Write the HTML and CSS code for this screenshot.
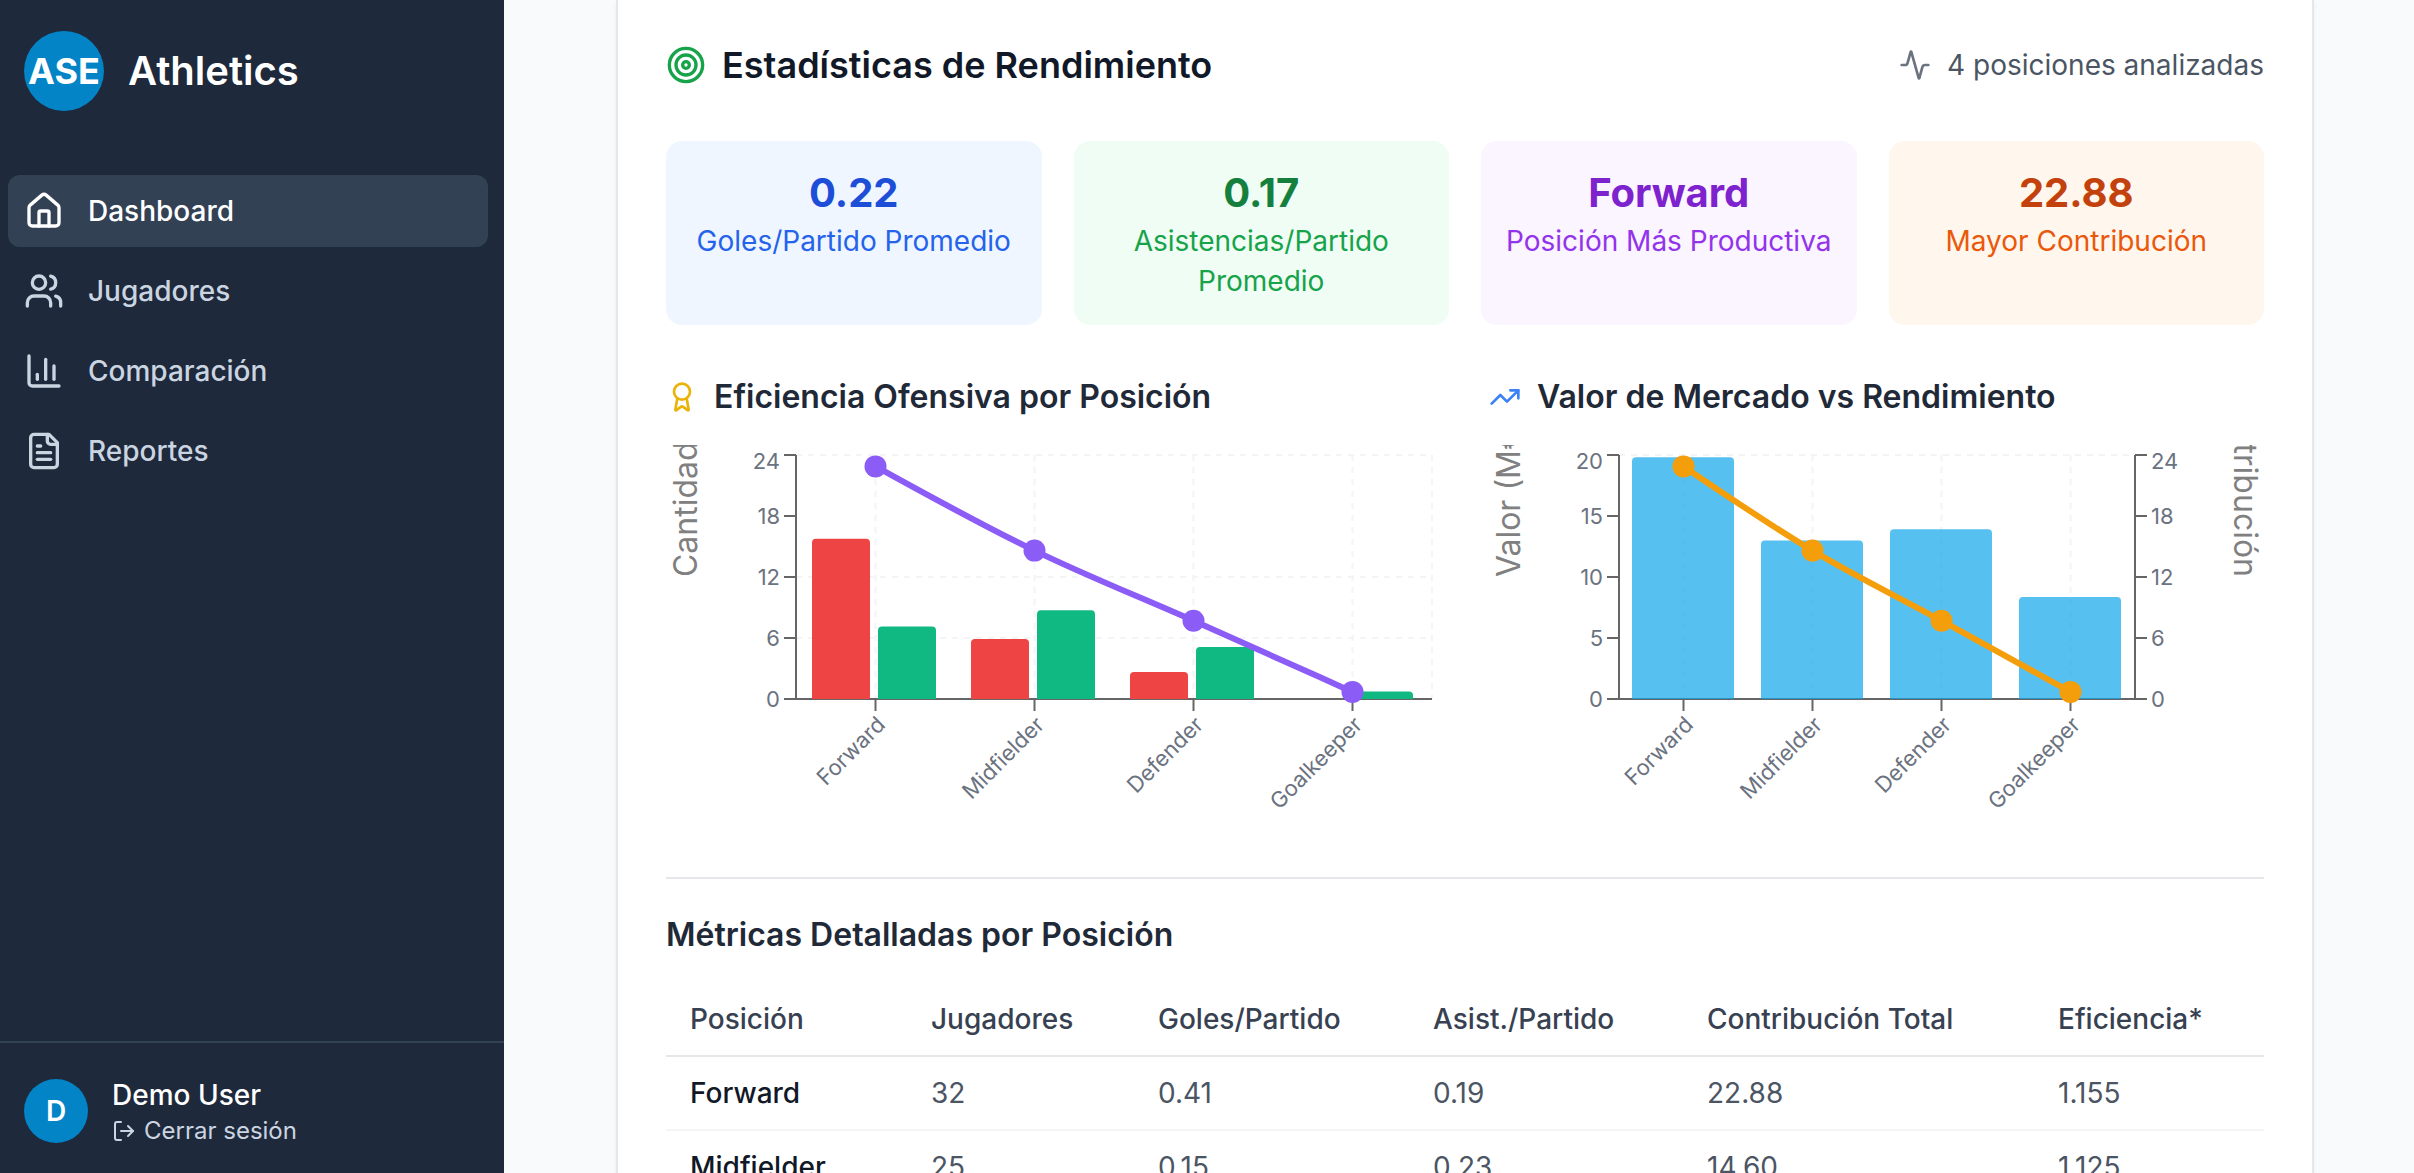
FILE: index.html
```html
<!DOCTYPE html>
<html lang="es">
<head>
<meta charset="utf-8">
<title>Athletics</title>
<link rel="stylesheet" href="styles.css">
</head>
<body>
<div class="app">
  <aside class="sidebar">
    <div class="brand">
      <span class="brand-logo">ASE</span>
      <span class="brand-name">Athletics</span>
    </div>
    <nav class="nav">
      <a class="nav-item active">
        <svg class="icon icon-lg" viewBox="0 0 24 24"><path d="M15 21v-8a1 1 0 0 0-1-1h-4a1 1 0 0 0-1 1v8"/><path d="M3 10a2 2 0 0 1 .709-1.528l7-5.999a2 2 0 0 1 2.582 0l7 5.999A2 2 0 0 1 21 10v9a2 2 0 0 1-2 2H5a2 2 0 0 1-2-2z"/></svg>
        Dashboard
      </a>
      <a class="nav-item">
        <svg class="icon icon-lg" viewBox="0 0 24 24"><path d="M16 21v-2a4 4 0 0 0-4-4H6a4 4 0 0 0-4 4v2"/><circle cx="9" cy="7" r="4"/><path d="M22 21v-2a4 4 0 0 0-3-3.87"/><path d="M16 3.13a4 4 0 0 1 0 7.75"/></svg>
        Jugadores
      </a>
      <a class="nav-item">
        <svg class="icon icon-lg" viewBox="0 0 24 24"><path d="M3 3v16a2 2 0 0 0 2 2h16"/><path d="M18 17V9"/><path d="M13 17V5"/><path d="M8 17v-3"/></svg>
        Comparación
      </a>
      <a class="nav-item">
        <svg class="icon icon-lg" viewBox="0 0 24 24"><path d="M15 2H6a2 2 0 0 0-2 2v16a2 2 0 0 0 2 2h12a2 2 0 0 0 2-2V7Z"/><path d="M14 2v4a2 2 0 0 0 2 2h4"/><path d="M10 9H8"/><path d="M16 13H8"/><path d="M16 17H8"/></svg>
        Reportes
      </a>
    </nav>
    <div class="account">
      <span class="avatar">D</span>
      <div class="account-text">
        <div class="account-name">Demo User</div>
        <a class="logout">
          <svg class="icon icon-sm" viewBox="0 0 24 24"><path d="M9 21H5a2 2 0 0 1-2-2V5a2 2 0 0 1 2-2h4"/><path d="m16 17 5-5-5-5"/><path d="M21 12H9"/></svg>
          Cerrar sesión
        </a>
      </div>
    </div>
  </aside>

  <main class="main">
    <section class="card">
      <header class="card-header">
        <h2 class="card-title">
          <svg class="icon icon-lg green" viewBox="0 0 24 24"><circle cx="12" cy="12" r="10"/><circle cx="12" cy="12" r="6"/><circle cx="12" cy="12" r="2"/></svg>
          Estadísticas de Rendimiento
        </h2>
        <div class="card-note">
          <svg class="icon icon-md gray" viewBox="0 0 24 24"><path d="M22 12h-2.480a2 2 0 0 0-1.930 1.460l-2.350 8.360a.25.25 0 0 1-.48 0L9.240 2.180a.25.25 0 0 0-.48 0l-2.350 8.360A2 2 0 0 1 4.490 12H2"/></svg>
          4 posiciones analizadas
        </div>
      </header>

      <div class="stats">
        <div class="stat blue"><div class="stat-value">0.22</div><div class="stat-label">Goles/Partido Promedio</div></div>
        <div class="stat emerald"><div class="stat-value">0.17</div><div class="stat-label">Asistencias/Partido Promedio</div></div>
        <div class="stat purple"><div class="stat-value">Forward</div><div class="stat-label">Posición Más Productiva</div></div>
        <div class="stat orange"><div class="stat-value">22.88</div><div class="stat-label">Mayor Contribución</div></div>
      </div>

      <div class="charts">
        <div class="chart">
          <h3 class="section-title">
            <svg class="icon icon-md yellow" viewBox="0 0 24 24"><path d="m15.477 12.890 1.515 8.526a.5.5 0 0 1-.81.470l-3.580-2.687a1 1 0 0 0-1.197 0l-3.586 2.686a.5.5 0 0 1-.81-.469l1.514-8.526"/><circle cx="12" cy="8" r="6"/></svg>
            Eficiencia Ofensiva por Posición
          </h3>
          <svg class="plot" width="776" height="384" viewBox="0 0 776 384">
            <g class="grid">
              <path d="M130 193H766M130 132H766M130 10H766"/>
              <path d="M209.500 10V254M368.500 10V254M527.500 10V254M686.500 10V254M766 10V254"/>
            </g>
            <g class="axis">
              <path d="M130 254H766M209.500 254v12M368.500 254v12M527.500 254v12M686.500 254v12"/>
              <path d="M130 10V254M118 254h12M118 193h12M118 132h12M118 71h12M118 10h12"/>
            </g>
            <g class="tick-y end">
              <text x="114" y="261.800">0</text><text x="114" y="200.800">6</text><text x="114" y="139.800">12</text><text x="114" y="78.800">18</text><text x="114" y="23.800">24</text>
            </g>
            <g class="tick-x">
              <text transform="translate(209.500 270) rotate(-45)" dy=".71em">Forward</text>
              <text transform="translate(368.500 270) rotate(-45)" dy=".71em">Midfielder</text>
              <text transform="translate(527.500 270) rotate(-45)" dy=".71em">Defender</text>
              <text transform="translate(686.500 270) rotate(-45)" dy=".71em">Goalkeeper</text>
            </g>
            <text class="axis-label" transform="translate(20 132) rotate(-90)" dy=".355em">Cantidad</text>
            <g class="bar-red">
              <path d="M146 254V97.700a4 4 0 0 1 4-4h50a4 4 0 0 1 4 4V254z"/>
              <path d="M305 254V198a4 4 0 0 1 4-4h50a4 4 0 0 1 4 4V254z"/>
              <path d="M464 254V231a4 4 0 0 1 4-4h50a4 4 0 0 1 4 4V254z"/>
            </g>
            <g class="bar-green">
              <path d="M212 254V185.400a4 4 0 0 1 4-4h50a4 4 0 0 1 4 4V254z"/>
              <path d="M371 254V169.300a4 4 0 0 1 4-4h50a4 4 0 0 1 4 4V254z"/>
              <path d="M530 254V206a4 4 0 0 1 4-4h50a4 4 0 0 1 4 4V254z"/>
              <path d="M689 254V250.600a4 4 0 0 1 4-4h50a4 4 0 0 1 4 4V254z"/>
            </g>
            <path class="line violet" d="M209.500 21.400C262.500 50.700 315.500 79.900 368.500 105.600C421.500 131.300 474.500 152.200 527.500 175.700C580.500 199.200 633.500 223.100 686.500 246.900"/>
            <g class="dot-violet"><circle cx="209.500" cy="21.400" r="11"/><circle cx="368.500" cy="105.600" r="11"/><circle cx="527.500" cy="175.700" r="11"/><circle cx="686.500" cy="246.900" r="11"/></g>
          </svg>
        </div>

        <div class="chart">
          <h3 class="section-title">
            <svg class="icon icon-md sky" viewBox="0 0 24 24"><path d="M22 7 13.500 15.500 8.500 10.500 2 17"/><path d="M16 7h6v6"/></svg>
            Valor de Mercado vs Rendimiento
          </h3>
          <svg class="plot" width="776" height="384" viewBox="0 0 776 384">
            <g class="grid">
              <path d="M130 10H646"/>
              <path d="M194.500 10V254M323.500 10V254M452.500 10V254M581.500 10V254"/>
            </g>
            <g class="axis">
              <path d="M130 254H646M194.500 254v12M323.500 254v12M452.500 254v12M581.500 254v12"/>
              <path d="M130 10V254M118 254h12M118 193h12M118 132h12M118 71h12M118 10h12"/>
              <path d="M646 10V254M646 254h12M646 193h12M646 132h12M646 71h12M646 10h12"/>
            </g>
            <g class="tick-y end">
              <text x="114" y="261.800">0</text><text x="114" y="200.800">5</text><text x="114" y="139.800">10</text><text x="114" y="78.800">15</text><text x="114" y="23.800">20</text>
            </g>
            <g class="tick-y">
              <text x="662" y="261.800">0</text><text x="662" y="200.800">6</text><text x="662" y="139.800">12</text><text x="662" y="78.800">18</text><text x="662" y="23.800">24</text>
            </g>
            <g class="tick-x">
              <text transform="translate(194.500 270) rotate(-45)" dy=".71em">Forward</text>
              <text transform="translate(323.500 270) rotate(-45)" dy=".71em">Midfielder</text>
              <text transform="translate(452.500 270) rotate(-45)" dy=".71em">Defender</text>
              <text transform="translate(581.500 270) rotate(-45)" dy=".71em">Goalkeeper</text>
            </g>
            <text class="axis-label" transform="translate(20 132) rotate(-90)" dy=".355em">Valor (M€)</text>
            <text class="axis-label end" transform="translate(756 132) rotate(90)" dy=".355em">Contribución</text>
            <g class="bar-sky">
              <path d="M143 254V16.200a4 4 0 0 1 4-4h94a4 4 0 0 1 4 4V254z"/>
              <path d="M272 254V99.400a4 4 0 0 1 4-4h94a4 4 0 0 1 4 4V254z"/>
              <path d="M401 254V88.200a4 4 0 0 1 4-4h94a4 4 0 0 1 4 4V254z"/>
              <path d="M530 254V156a4 4 0 0 1 4-4h94a4 4 0 0 1 4 4V254z"/>
            </g>
            <path class="line amber" d="M194.500 21.400C237.500 50.700 280.500 79.900 323.500 105.600C366.500 131.300 409.500 152.200 452.500 175.700C495.500 199.200 538.500 223.100 581.500 246.900"/>
            <g class="dot-amber"><circle cx="194.500" cy="21.400" r="11"/><circle cx="323.500" cy="105.600" r="11"/><circle cx="452.500" cy="175.700" r="11"/><circle cx="581.500" cy="246.900" r="11"/></g>
          </svg>
        </div>
      </div>

      <div class="details">
        <h3 class="section-title">Métricas Detalladas por Posición</h3>
        <table class="metrics">
          <colgroup><col class="c1"><col class="c2"><col class="c3"><col class="c4"><col class="c5"><col class="c6"></colgroup>
          <thead>
            <tr><th>Posición</th><th>Jugadores</th><th>Goles/Partido</th><th>Asist./Partido</th><th>Contribución Total</th><th>Eficiencia*</th></tr>
          </thead>
          <tbody>
            <tr><td>Forward</td><td>32</td><td>0.41</td><td>0.19</td><td>22.88</td><td>1.155</td></tr>
            <tr><td>Midfielder</td><td>25</td><td>0.15</td><td>0.23</td><td>14.60</td><td>1.125</td></tr>
          </tbody>
        </table>
      </div>
    </section>
  </main>
</div>
</body>
</html>
```

FILE: styles.css
```css
* { box-sizing: border-box; }

html, body { height: 100%; }

body {
  margin: 0;
  overflow: hidden;
  background: #f8fafc;
  color: #111827;
  font-family: Inter, "Liberation Sans", sans-serif;
  font-size: 28px;
  line-height: 40px;
}

h2, h3 { margin: 0; }

.app { display: flex; height: 1173px; overflow: hidden; }

.icon {
  flex: none;
  fill: none;
  stroke: currentColor;
  stroke-width: 2;
  stroke-linecap: round;
  stroke-linejoin: round;
}
.icon-lg { width: 40px; height: 40px; }
.icon-md { width: 32px; height: 32px; }
.icon-sm { width: 24px; height: 24px; }
.green { color: #16a34a; }
.gray { color: #6b7280; }
.yellow { color: #eab308; }
.sky { color: #3b82f6; }

/* Sidebar */
.sidebar {
  display: flex;
  flex: none;
  flex-direction: column;
  width: 504px;
  height: 1179px;
  background: #1e293b;
  color: #fff;
}
.brand {
  display: flex;
  align-items: center;
  gap: 24px;
  height: 142px;
  padding: 0 24px;
}
.brand-logo {
  display: flex;
  align-items: center;
  justify-content: center;
  width: 80px;
  height: 80px;
  border-radius: 50%;
  background: #0284c7;
  font-size: 36px;
  font-weight: 700;
}
.brand-name { font-size: 40px; font-weight: 600; }

.nav {
  display: flex;
  flex: 1;
  flex-direction: column;
  gap: 8px;
  padding: 33px 16px 0 8px;
}
.nav-item {
  display: flex;
  align-items: center;
  gap: 24px;
  height: 72px;
  padding: 0 16px;
  border-radius: 12px;
  color: #cbd5e1;
  font-weight: 500;
}
.nav-item.active { background: #334155; color: #fff; }

.account {
  display: flex;
  align-items: center;
  gap: 24px;
  padding: 32px 24px;
  border-top: 2px solid #334155;
}
.avatar {
  display: flex;
  align-items: center;
  justify-content: center;
  width: 64px;
  height: 64px;
  border-radius: 50%;
  background: #0284c7;
  font-weight: 600;
}
.account-name { font-weight: 500; }
.logout {
  display: flex;
  align-items: center;
  gap: 8px;
  color: #cbd5e1;
  font-size: 24px;
  line-height: 32px;
}

/* Performance card */
.main { flex: 1; padding: 0 100px 0 112px; }
.card {
  height: 1400px;
  padding: 37px 48px 0;
  border: solid #e5e7eb;
  border-width: 0 2px;
  background: #fff;
  box-shadow: 0 2px 4px rgba(0, 0, 0, .05);
}
.card-header {
  display: flex;
  align-items: center;
  justify-content: space-between;
  height: 56px;
}
.card-title {
  display: flex;
  align-items: center;
  gap: 16px;
  font-size: 36px;
  font-weight: 600;
}
.card-note {
  display: flex;
  align-items: center;
  gap: 16px;
  color: #4b5563;
}

.stats {
  display: grid;
  grid-template-columns: repeat(4, minmax(0, 1fr));
  gap: 32px;
  margin-top: 48px;
}
.stat { padding: 24px; border-radius: 16px; text-align: center; }
.stat-value { font-size: 40px; font-weight: 700; line-height: 56px; }
.blue { background: #eff6ff; color: #2563eb; }
.blue .stat-value { color: #1d4ed8; }
.emerald { background: #f0fdf4; color: #16a34a; }
.emerald .stat-value { color: #15803d; }
.purple { background: #faf5ff; color: #9333ea; }
.purple .stat-value { color: #7e22ce; }
.orange { background: #fff7ed; color: #ea580c; }
.orange .stat-value { color: #c2410c; }

.section-title {
  display: flex;
  align-items: center;
  gap: 16px;
  color: #1f2937;
  font-size: 32px;
  font-weight: 600;
  line-height: 48px;
}

/* Charts */
.charts {
  display: grid;
  grid-template-columns: repeat(2, minmax(0, 1fr));
  gap: 48px;
  margin-top: 48px;
}
.plot { display: block; margin-top: 24px; overflow: hidden; }
.grid { fill: none; stroke: #f3f4f6; stroke-width: 2; stroke-dasharray: 6 6; }
.axis { fill: none; stroke: #666; stroke-width: 2; }
.tick-y { fill: #6b7280; font-size: 22px; }
.tick-x { fill: #6b7280; font-size: 22px; text-anchor: end; }
.axis-label { fill: #808080; font-size: 32px; }
.end { text-anchor: end; }
.bar-red { fill: #ef4444; }
.bar-green { fill: #10b981; }
.bar-sky { fill: #0ea5e9; fill-opacity: .7; }
.line { fill: none; stroke-width: 6; }
.violet { stroke: #8b5cf6; }
.amber { stroke: #f59e0b; }
.dot-violet { fill: #8b5cf6; }
.dot-amber { fill: #f59e0b; }

/* Metrics table */
.details {
  margin-top: 48px;
  padding-top: 32px;
  border-top: 2px solid #e5e7eb;
}
.metrics {
  width: 100%;
  margin-top: 24px;
  border-spacing: 0;
  table-layout: fixed;
}
.c1 { width: 241px; }
.c2 { width: 227px; }
.c3 { width: 275px; }
.c4 { width: 274px; }
.c5 { width: 351px; }
.c6 { width: 230px; }
th, td { padding: 16px 24px; text-align: left; white-space: nowrap; }
th { border-bottom: 2px solid #e5e7eb; color: #374151; font-weight: 500; }
td { border-bottom: 2px solid #f3f4f6; color: #4b5563; }
td:first-child { color: #111827; font-weight: 500; }
```
